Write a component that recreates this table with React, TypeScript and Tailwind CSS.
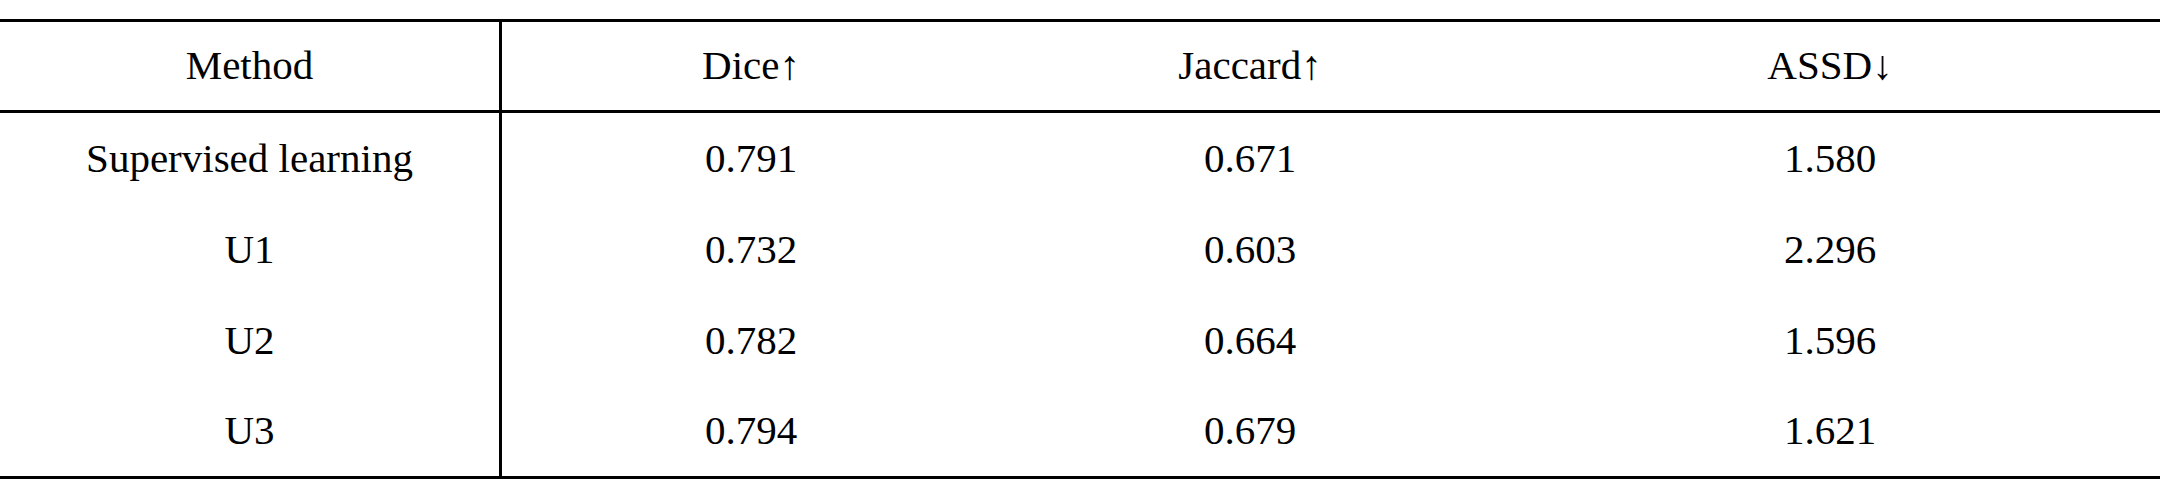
import React from 'react';

interface Row {
  method: string;
  dice: string;
  jaccard: string;
  assd: string;
}

const rows: Row[] = [
  { method: 'Supervised learning', dice: '0.791', jaccard: '0.671', assd: '1.580' },
  { method: 'U1', dice: '0.732', jaccard: '0.603', assd: '2.296' },
  { method: 'U2', dice: '0.782', jaccard: '0.664', assd: '1.596' },
  { method: 'U3', dice: '0.794', jaccard: '0.679', assd: '1.621' },
];

const rowHeights = ['h-[91px]', 'h-[91px]', 'h-[91px]', 'h-[90px]'];

const ResultsTable: React.FC = () => {
  return (
    <div className="w-[2160px] h-[498px] bg-white pt-[19px] text-black text-[41px] font-['Liberation_Serif','Times_New_Roman',serif]">
      <div className="border-y-[3px] border-black">
        <div className="grid grid-cols-[502px_498px_500px_1fr] h-[91px] border-b-[3px] border-black">
          <div className="flex items-center justify-center border-r-[3px] border-black">Method</div>
          <div className="flex items-center justify-center">Dice↑</div>
          <div className="flex items-center justify-center">Jaccard↑</div>
          <div className="flex items-center justify-center">ASSD↓</div>
        </div>
        {rows.map((row, index) => (
          <div key={index} className={`grid grid-cols-[502px_498px_500px_1fr] ${rowHeights[index]}`}>
            <div className="flex items-center justify-center border-r-[3px] border-black">{row.method}</div>
            <div className="flex items-center justify-center">{row.dice}</div>
            <div className="flex items-center justify-center">{row.jaccard}</div>
            <div className="flex items-center justify-center">{row.assd}</div>
          </div>
        ))}
      </div>
    </div>
  );
};

export default ResultsTable;
